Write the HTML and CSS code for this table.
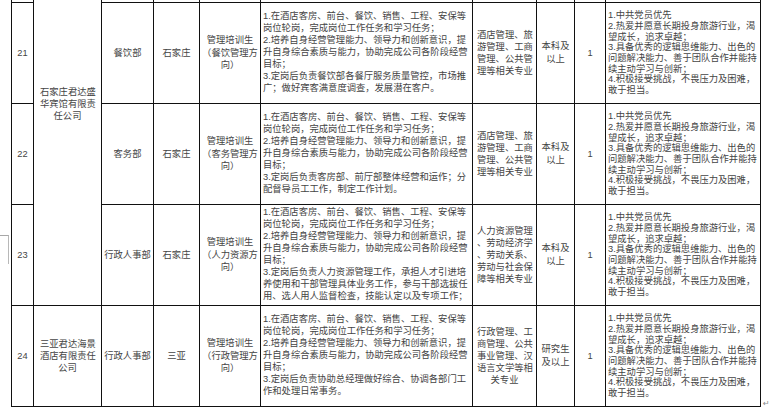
FILE: index.html
```html
<!DOCTYPE html>
<html lang="zh-CN">
<head>
<meta charset="utf-8">
<title>招聘岗位表</title>
<link rel="stylesheet" href="styles.css">
</head>
<body>
<div class="page">
  <div class="gutter"><span class="mark"></span></div>
  <table class="jobs">
    <colgroup>
      <col class="c-no"><col class="c-co"><col class="c-dept"><col class="c-loc"><col class="c-pos">
      <col class="c-duty"><col class="c-major"><col class="c-edu"><col class="c-cnt"><col class="c-req">
    </colgroup>
    <tbody>
      <tr class="prev">
        <td class="no"></td>
        <td class="co" rowspan="4"><span class="l">石家庄君达盛</span><span class="l">华宾馆有限责</span><span class="l">任公司</span></td>
        <td class="dept"></td>
        <td class="loc"></td>
        <td class="pos"></td>
        <td class="duty"></td>
        <td class="major"></td>
        <td class="edu"></td>
        <td class="cnt"></td>
        <td class="req"></td>
      </tr>
      <tr>
        <td class="no">21</td>
        <td class="dept">餐饮部</td>
        <td class="loc">石家庄</td>
        <td class="pos"><span class="l">管理培训生</span><span class="l">（餐饮管理方</span><span class="l">向）</span></td>
        <td class="duty">
          <span class="l j">1.在酒店客房、前台、餐饮、销售、工程、安保等</span>
          <span class="l">岗位轮岗，完成岗位工作任务和学习任务；</span>
          <span class="l j">2.培养自身经营管理能力、领导力和创新意识，提</span>
          <span class="l j">升自身综合素质与能力，协助完成公司各阶段经营</span>
          <span class="l">目标；</span>
          <span class="l j">3.定岗后负责餐饮部各餐厅服务质量管控，市场推</span>
          <span class="l">广；做好宾客满意度调查，发展潜在客户。</span>
        </td>
        <td class="major"><span class="l j">酒店管理、旅</span><span class="l j">游管理、工商</span><span class="l j">管理、公共管</span><span class="l j">理等相关专业</span></td>
        <td class="edu"><span class="l">本科及</span><span class="l">以上</span></td>
        <td class="cnt">1</td>
        <td class="req">
          <span class="l">1.中共党员优先</span>
          <span class="l j">2.热爱并愿意长期投身旅游行业，渴</span>
          <span class="l">望成长，追求卓越；</span>
          <span class="l j">3.具备优秀的逻辑思维能力、出色的</span>
          <span class="l j">问题解决能力、善于团队合作并能持</span>
          <span class="l">续主动学习与创新；</span>
          <span class="l j">4.积极接受挑战，不畏压力及困难，</span>
          <span class="l">敢于担当。</span>
        </td>
      </tr>
      <tr>
        <td class="no">22</td>
        <td class="dept">客务部</td>
        <td class="loc">石家庄</td>
        <td class="pos"><span class="l">管理培训生</span><span class="l">（客务管理方</span><span class="l">向）</span></td>
        <td class="duty">
          <span class="l j">1.在酒店客房、前台、餐饮、销售、工程、安保等</span>
          <span class="l">岗位轮岗，完成岗位工作任务和学习任务；</span>
          <span class="l j">2.培养自身经营管理能力、领导力和创新意识，提</span>
          <span class="l j">升自身综合素质与能力，协助完成公司各阶段经营</span>
          <span class="l">目标；</span>
          <span class="l j">3.定岗后负责客房部、前厅部整体经营和运作；分</span>
          <span class="l">配督导员工工作，制定工作计划。</span>
        </td>
        <td class="major"><span class="l j">酒店管理、旅</span><span class="l j">游管理、工商</span><span class="l j">管理、公共管</span><span class="l j">理等相关专业</span></td>
        <td class="edu"><span class="l">本科及</span><span class="l">以上</span></td>
        <td class="cnt">1</td>
        <td class="req">
          <span class="l">1.中共党员优先</span>
          <span class="l j">2.热爱并愿意长期投身旅游行业，渴</span>
          <span class="l">望成长，追求卓越；</span>
          <span class="l j">3.具备优秀的逻辑思维能力、出色的</span>
          <span class="l j">问题解决能力、善于团队合作并能持</span>
          <span class="l">续主动学习与创新；</span>
          <span class="l j">4.积极接受挑战，不畏压力及困难，</span>
          <span class="l">敢于担当。</span>
        </td>
      </tr>
      <tr>
        <td class="no">23</td>
        <td class="dept">行政人事部</td>
        <td class="loc">石家庄</td>
        <td class="pos"><span class="l">管理培训生</span><span class="l">（人力资源方</span><span class="l">向）</span></td>
        <td class="duty">
          <span class="l j">1.在酒店客房、前台、餐饮、销售、工程、安保等</span>
          <span class="l">岗位轮岗，完成岗位工作任务和学习任务；</span>
          <span class="l j">2.培养自身经营管理能力、领导力和创新意识，提</span>
          <span class="l j">升自身综合素质与能力，协助完成公司各阶段经营</span>
          <span class="l">目标；</span>
          <span class="l j">3.定岗后负责人力资源管理工作，承担人才引进培</span>
          <span class="l j">养使用和干部管理具体业务工作，参与干部选拔任</span>
          <span class="l j">用、选人用人监督检查，技能认定以及专项工作；</span>
        </td>
        <td class="major"><span class="l j">人力资源管理</span><span class="l j">、劳动经济学</span><span class="l">、劳动关系、</span><span class="l j">劳动与社会保</span><span class="l j">障等相关专业</span></td>
        <td class="edu"><span class="l">本科及</span><span class="l">以上</span></td>
        <td class="cnt">1</td>
        <td class="req">
          <span class="l">1.中共党员优先</span>
          <span class="l j">2.热爱并愿意长期投身旅游行业，渴</span>
          <span class="l">望成长，追求卓越；</span>
          <span class="l j">3.具备优秀的逻辑思维能力、出色的</span>
          <span class="l j">问题解决能力、善于团队合作并能持</span>
          <span class="l">续主动学习与创新；</span>
          <span class="l j">4.积极接受挑战，不畏压力及困难，</span>
          <span class="l">敢于担当。</span>
        </td>
      </tr>
      <tr>
        <td class="no">24</td>
        <td class="co"><span class="l">三亚君达海景</span><span class="l">酒店有限责任</span><span class="l">公司</span></td>
        <td class="dept">行政人事部</td>
        <td class="loc">三亚</td>
        <td class="pos"><span class="l">管理培训生</span><span class="l">（行政管理方</span><span class="l">向）</span></td>
        <td class="duty">
          <span class="l j">1.在酒店客房、前台、餐饮、销售、工程、安保等</span>
          <span class="l">岗位轮岗，完成岗位工作任务和学习任务；</span>
          <span class="l j">2.培养自身经营管理能力、领导力和创新意识，提</span>
          <span class="l j">升自身综合素质与能力，协助完成公司各阶段经营</span>
          <span class="l">目标；</span>
          <span class="l j">3.定岗后负责协助总经理做好综合、协调各部门工</span>
          <span class="l">作和处理日常事务。</span>
        </td>
        <td class="major"><span class="l j">行政管理、工</span><span class="l j">商管理、公共</span><span class="l j">事业管理、汉</span><span class="l j">语言文学等相</span><span class="l">关专业</span></td>
        <td class="edu"><span class="l">研究生</span><span class="l">及以上</span></td>
        <td class="cnt">1</td>
        <td class="req">
          <span class="l">1.中共党员优先</span>
          <span class="l j">2.热爱并愿意长期投身旅游行业，渴</span>
          <span class="l">望成长，追求卓越；</span>
          <span class="l j">3.具备优秀的逻辑思维能力、出色的</span>
          <span class="l j">问题解决能力、善于团队合作并能持</span>
          <span class="l">续主动学习与创新；</span>
          <span class="l j">4.积极接受挑战，不畏压力及困难，</span>
          <span class="l">敢于担当。</span>
        </td>
      </tr>
    </tbody>
  </table>
  <span class="para">↵</span>
</div>
</body>
</html>
```
FILE: styles.css
```css
html, body {
  margin: 0;
  padding: 0;
  background: #ffffff;
}
body {
  font-family: "Liberation Sans", "Noto Sans CJK SC", sans-serif;
  color: #444444;
  overflow: hidden;
}
.page {
  display: flex;
  align-items: flex-start;
  margin-top: -99px;
}
.gutter {
  flex: none;
  width: 11px;
}
.mark {
  display: block;
  margin-top: 334px;
  width: 8px;
  height: 28px;
  border-top: 1px solid #a8a8a8;
  border-right: 1px solid #b8b8b8;
}
.jobs {
  flex: none;
  border-collapse: collapse;
  table-layout: fixed;
  width: 750px;
}
.c-no { width: 22px; }
.c-co { width: 68px; }
.c-dept { width: 52px; }
.c-loc { width: 46px; }
.c-pos { width: 61px; }
.c-duty { width: 212px; }
.c-major { width: 64px; }
.c-edu { width: 38px; }
.c-cnt { width: 31px; }
.c-req { width: 155px; }
.jobs tr {
  height: 101px;
}
.jobs td {
  border: 1px solid #111111;
  padding: 0;
  vertical-align: middle;
  text-align: center;
  font-size: 9.3px;
  line-height: 12px;
  overflow: hidden;
}
.l {
  display: block;
  white-space: nowrap;
}
.j {
  text-align: justify;
  text-align-last: justify;
}
.jobs td.co {
  padding: 0 6px;
}
.jobs td.pos {
  line-height: 12.5px;
}
.jobs td.edu {
  line-height: 13px;
}
.jobs td.duty {
  text-align: left;
  padding: 0 10px 0 2px;
  line-height: 11.9px;
}
.jobs td.major {
  padding: 0 4px;
}
.jobs td.req {
  text-align: left;
  padding: 0 9px 0 2px;
  line-height: 10.7px;
}
.para {
  align-self: flex-end;
  margin-left: 2px;
  margin-bottom: -2px;
  font-family: "DejaVu Sans", sans-serif;
  font-size: 8px;
  line-height: 10px;
  color: #8a8a8a;
}
```
